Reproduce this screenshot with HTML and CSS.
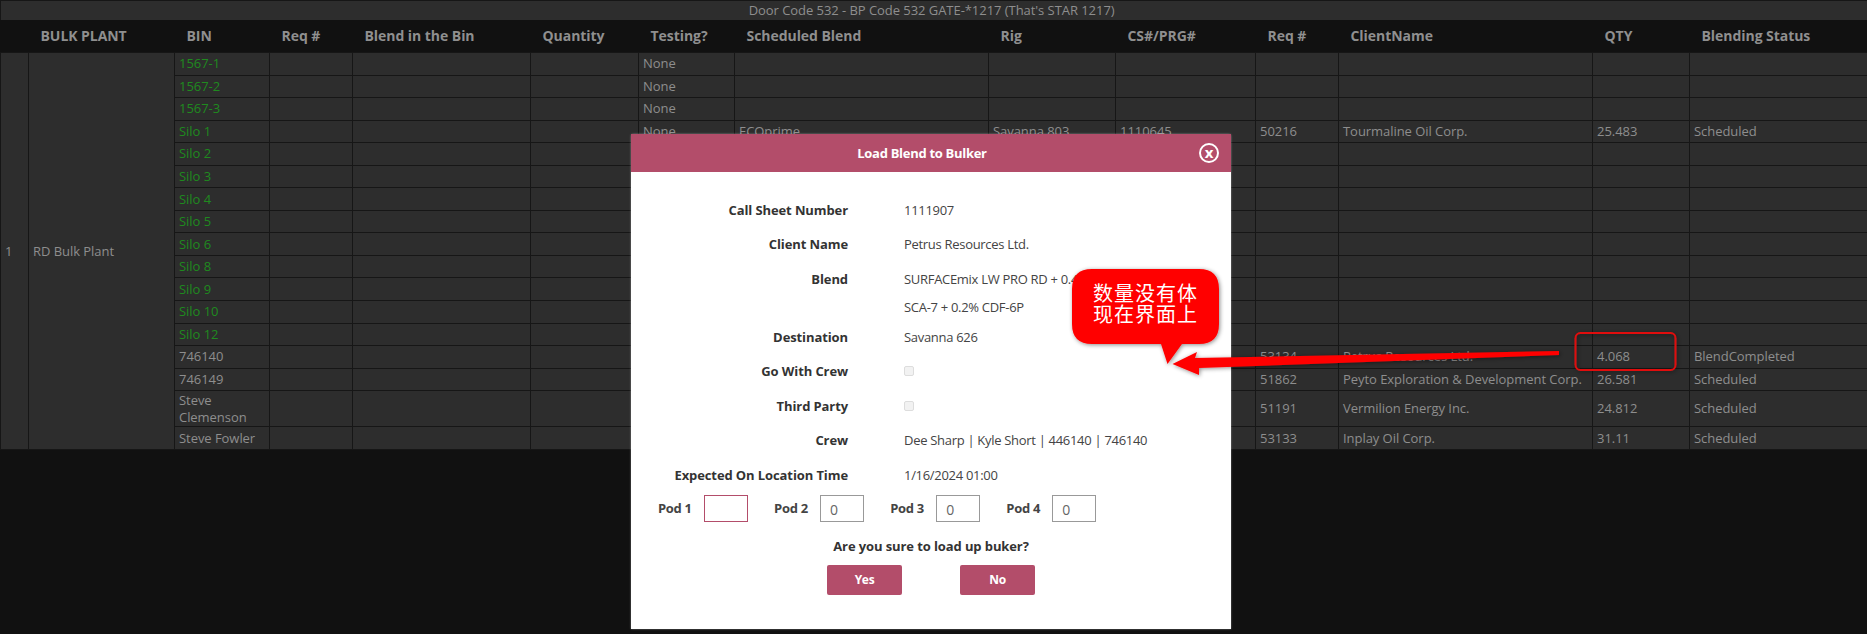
FILE: index.html
```html
<!DOCTYPE html>
<html lang="en">
<head>
  <meta charset="UTF-8">
  <title>Bulk Plant</title>
  <link rel="stylesheet" href="styles.css">
</head>
<body>
  <table class="plant-table">
    <colgroup>
      <col class="col-no"><col class="col-plant"><col class="col-bin"><col class="col-req"><col class="col-blend">
      <col class="col-qty"><col class="col-test"><col class="col-sched"><col class="col-rig"><col class="col-cs">
      <col class="col-req2"><col class="col-client"><col class="col-qty2"><col class="col-status">
    </colgroup>
    <thead>
      <tr class="title-row"><td colspan="14">Door Code 532 - BP Code 532 GATE-*1217 (That's STAR 1217)</td></tr>
      <tr class="head-row">
        <th></th><th>BULK PLANT</th><th>BIN</th><th>Req #</th><th>Blend in the Bin</th><th>Quantity</th><th>Testing?</th>
        <th>Scheduled Blend</th><th>Rig</th><th>CS#/PRG#</th><th>Req #</th><th>ClientName</th><th>QTY</th><th>Blending Status</th>
      </tr>
    </thead>
    <tbody>
      <tr>
        <td rowspan="17">1</td><td rowspan="17">RD Bulk Plant</td>
        <td class="bin-free">1567-1</td><td></td><td></td><td></td><td>None</td><td></td><td></td><td></td><td></td><td></td><td></td><td></td>
      </tr>
      <tr><td class="bin-free">1567-2</td><td></td><td></td><td></td><td>None</td><td></td><td></td><td></td><td></td><td></td><td></td><td></td></tr>
      <tr><td class="bin-free">1567-3</td><td></td><td></td><td></td><td>None</td><td></td><td></td><td></td><td></td><td></td><td></td><td></td></tr>
      <tr><td class="bin-free">Silo 1</td><td></td><td></td><td></td><td>None</td><td>ECOprime</td><td>Savanna 803</td><td>1110645</td><td>50216</td><td>Tourmaline Oil Corp.</td><td>25.483</td><td>Scheduled</td></tr>
      <tr><td class="bin-free">Silo 2</td><td></td><td></td><td></td><td></td><td></td><td></td><td></td><td></td><td></td><td></td><td></td></tr>
      <tr><td class="bin-free">Silo 3</td><td></td><td></td><td></td><td></td><td></td><td></td><td></td><td></td><td></td><td></td><td></td></tr>
      <tr><td class="bin-free">Silo 4</td><td></td><td></td><td></td><td></td><td></td><td></td><td></td><td></td><td></td><td></td><td></td></tr>
      <tr><td class="bin-free">Silo 5</td><td></td><td></td><td></td><td></td><td></td><td></td><td></td><td></td><td></td><td></td><td></td></tr>
      <tr><td class="bin-free">Silo 6</td><td></td><td></td><td></td><td></td><td></td><td></td><td></td><td></td><td></td><td></td><td></td></tr>
      <tr><td class="bin-free">Silo 8</td><td></td><td></td><td></td><td></td><td></td><td></td><td></td><td></td><td></td><td></td><td></td></tr>
      <tr><td class="bin-free">Silo 9</td><td></td><td></td><td></td><td></td><td></td><td></td><td></td><td></td><td></td><td></td><td></td></tr>
      <tr><td class="bin-free">Silo 10</td><td></td><td></td><td></td><td></td><td></td><td></td><td></td><td></td><td></td><td></td><td></td></tr>
      <tr><td class="bin-free">Silo 12</td><td></td><td></td><td></td><td></td><td></td><td></td><td></td><td></td><td></td><td></td><td></td></tr>
      <tr><td>746140</td><td></td><td></td><td></td><td></td><td></td><td></td><td></td><td>53134</td><td>Petrus Resources Ltd.</td><td>4.068</td><td>BlendCompleted</td></tr>
      <tr><td>746149</td><td></td><td></td><td></td><td></td><td></td><td></td><td></td><td>51862</td><td>Peyto Exploration &amp; Development Corp.</td><td>26.581</td><td>Scheduled</td></tr>
      <tr class="row-tall"><td>Steve Clemenson</td><td></td><td></td><td></td><td></td><td></td><td></td><td></td><td>51191</td><td>Vermilion Energy Inc.</td><td>24.812</td><td>Scheduled</td></tr>
      <tr class="row-last"><td>Steve Fowler</td><td></td><td></td><td></td><td></td><td></td><td></td><td></td><td>53133</td><td>Inplay Oil Corp.</td><td>31.11</td><td>Scheduled</td></tr>
    </tbody>
  </table>

  <div class="modal">
    <div class="modal-head">
      <span class="modal-title">Load Blend to Bulker</span>
      <button class="modal-close">x</button>
    </div>
    <div class="modal-body">
      <div class="field"><label>Call Sheet Number</label><div>1111907</div></div>
      <div class="field"><label>Client Name</label><div>Petrus Resources Ltd.</div></div>
      <div class="field field-blend"><label>Blend</label><div>SURFACEmix LW PRO RD + 0.4%<div class="field-more">SCA-7 + 0.2% CDF-6P</div></div></div>
      <div class="field"><label>Destination</label><div>Savanna 626</div></div>
      <div class="field"><label>Go With Crew</label><div><input type="checkbox" class="check" disabled></div></div>
      <div class="field"><label>Third Party</label><div><input type="checkbox" class="check" disabled></div></div>
      <div class="field"><label>Crew</label><div>Dee Sharp | Kyle Short | 446140 | 746140</div></div>
      <div class="field field-time"><label>Expected On Location Time</label><div>1/16/2024 01:00</div></div>
      <div class="pods">
        <div class="pod"><label>Pod 1</label><input class="pod-input pod-focus" type="text"></div>
        <div class="pod"><label>Pod 2</label><input class="pod-input" type="text" value="0"></div>
        <div class="pod"><label>Pod 3</label><input class="pod-input" type="text" value="0"></div>
        <div class="pod"><label>Pod 4</label><input class="pod-input" type="text" value="0"></div>
      </div>
      <div class="question">Are you sure to load up buker?</div>
      <div class="actions">
        <button class="btn">Yes</button>
        <button class="btn">No</button>
      </div>
    </div>
  </div>

  <!-- screenshot annotation drawn on top of the page -->
  <svg class="markup" width="1867" height="634" viewBox="0 0 1867 634">
    <defs>
      <filter id="soft" x="-20%" y="-20%" width="140%" height="140%">
        <feDropShadow dx="1" dy="1" stdDeviation="2" flood-color="#000" flood-opacity="0.45"/>
      </filter>
    </defs>
    <rect x="1575.5" y="333" width="100" height="37" rx="5" fill="none" stroke="#e01010" stroke-width="2" filter="url(#soft)"/>
    <path d="M1172.5 364 L1197 352 L1195 358 L1559 351 L1559 355 L1199 368 L1199 375 Z" fill="#f00" filter="url(#soft)"/>
    <path d="M1092 269 H1199 Q1219 269 1219 289 V324 Q1219 344 1199 344 H1182 L1167.5 364 L1161 344 H1092 Q1072 344 1072 324 V289 Q1072 269 1092 269 Z" fill="#f00" filter="url(#soft)"/>
  </svg>
  <div class="callout-text">数量没有体<br>现在界面上</div>
</body>
</html>
```

FILE: styles.css
```css
html, body {
  margin: 0;
  height: 100%;
}
body {
  background: #111;
  font-family: "Open Sans", "Noto Sans", sans-serif;
  font-size: 13px;
  color: #8e8e8e;
  overflow: hidden;
  position: relative;
}

/* main table */
.plant-table {
  width: 1867px;
  border-collapse: collapse;
  table-layout: fixed;
  letter-spacing: -0.05px;
}
.col-no { width: 28px; }
.col-plant { width: 146px; }
.col-bin { width: 95px; }
.col-req { width: 83px; }
.col-blend { width: 178px; }
.col-qty { width: 108px; }
.col-test { width: 96px; }
.col-sched { width: 254px; }
.col-rig { width: 127px; }
.col-cs { width: 140px; }
.col-req2 { width: 83px; }
.col-client { width: 254px; }
.col-qty2 { width: 97px; }
.col-status { width: 178px; }

.plant-table td {
  background: #2d2d2d;
  border: 1px solid #161616;
  padding: 0 4px;
  height: 22.55px;
  box-sizing: border-box;
  line-height: 17px;
}
.plant-table .title-row td {
  height: 19px;
  padding-right: 9px;
  text-align: center;
  line-height: 17px;
  border-bottom: 0;
}
.head-row th {
  background: #111;
  height: 33px;
  padding: 0 12px;
  text-align: left;
  font-size: 14px;
  font-weight: 700;
  color: #8f8f8f;
  box-sizing: border-box;
}
.plant-table .row-tall td { height: 36px; }
.plant-table .row-last td { height: 23px; }
.bin-free { color: #1f8a1f; }

/* load dialog */
.modal {
  position: absolute;
  left: 631px;
  top: 134px;
  width: 600px;
  height: 495px;
  background: #fff;
  color: #444;
  border-radius: 2px 2px 0 0;
  box-shadow: 0 0 2px rgba(255,255,255,0.5);
  letter-spacing: -0.3px;
}
.modal-head {
  display: flex;
  align-items: center;
  height: 38px;
  padding: 0 12px 0 14px;
  background: #b34d6a;
  color: #fff;
  font-weight: 700;
}
.modal-title {
  flex: 1;
  text-align: center;
}
.modal-close {
  width: 20px;
  height: 20px;
  padding: 0 0 2px;
  border: 2px solid #fff;
  border-radius: 50%;
  background: none;
  color: #fff;
  font: 700 15px/13px "Open Sans", sans-serif;
}
.modal-body {
  padding-top: 20.5px;
}
.field {
  display: flex;
  line-height: 34.4px;
  min-height: 34.4px;
}
.field label {
  width: 217px;
  margin-right: 56px;
  text-align: right;
  font-weight: 700;
  color: #333;
  letter-spacing: -0.1px;
}
.field-blend {
  padding-top: 1px;
}
.field-time {
  margin-top: 1px;
}
.field-more {
  line-height: 20px;
  margin-bottom: 3px;
}
.check {
  appearance: none;
  display: block;
  width: 10px;
  height: 10px;
  margin: 12px 0 0;
  background: #f2f2f2;
  border: 1px solid #ddd;
  border-radius: 2px;
  box-sizing: border-box;
}
.pods {
  display: flex;
  gap: 26.5px;
  margin-top: 2px;
  padding-left: 27px;
}
.pod {
  display: flex;
  align-items: center;
}
.pod label {
  width: 35px;
  margin-right: 11px;
  font-weight: 700;
  color: #444;
}
.pod-input {
  width: 43.6px;
  height: 27px;
  padding: 2px 9px 0;
  box-sizing: border-box;
  border: 1px solid #999;
  border-radius: 0;
  outline: none;
  font: 14px "Open Sans", sans-serif;
  color: #666;
}
.pod-focus {
  border-color: #b34d6a;
}
.question {
  margin-top: 14px;
  line-height: 20px;
  text-align: center;
  font-weight: 700;
  color: #333;
  letter-spacing: -0.1px;
}
.actions {
  display: flex;
  justify-content: center;
  gap: 58px;
  margin-top: 9px;
}
.btn {
  width: 75px;
  height: 30px;
  border: none;
  border-radius: 2px;
  background: #b34d6a;
  color: #fff;
  font: 700 12px "Open Sans", sans-serif;
  letter-spacing: -0.3px;
}

/* annotation over the screenshot */
.markup {
  position: absolute;
  left: 0;
  top: 0;
}
.callout-text {
  position: absolute;
  left: 1093px;
  top: 282px;
  font-family: "Noto Sans CJK SC", sans-serif;
  font-size: 20px;
  line-height: 21px;
  letter-spacing: 1px;
  color: #fff;
  white-space: nowrap;
}
```
